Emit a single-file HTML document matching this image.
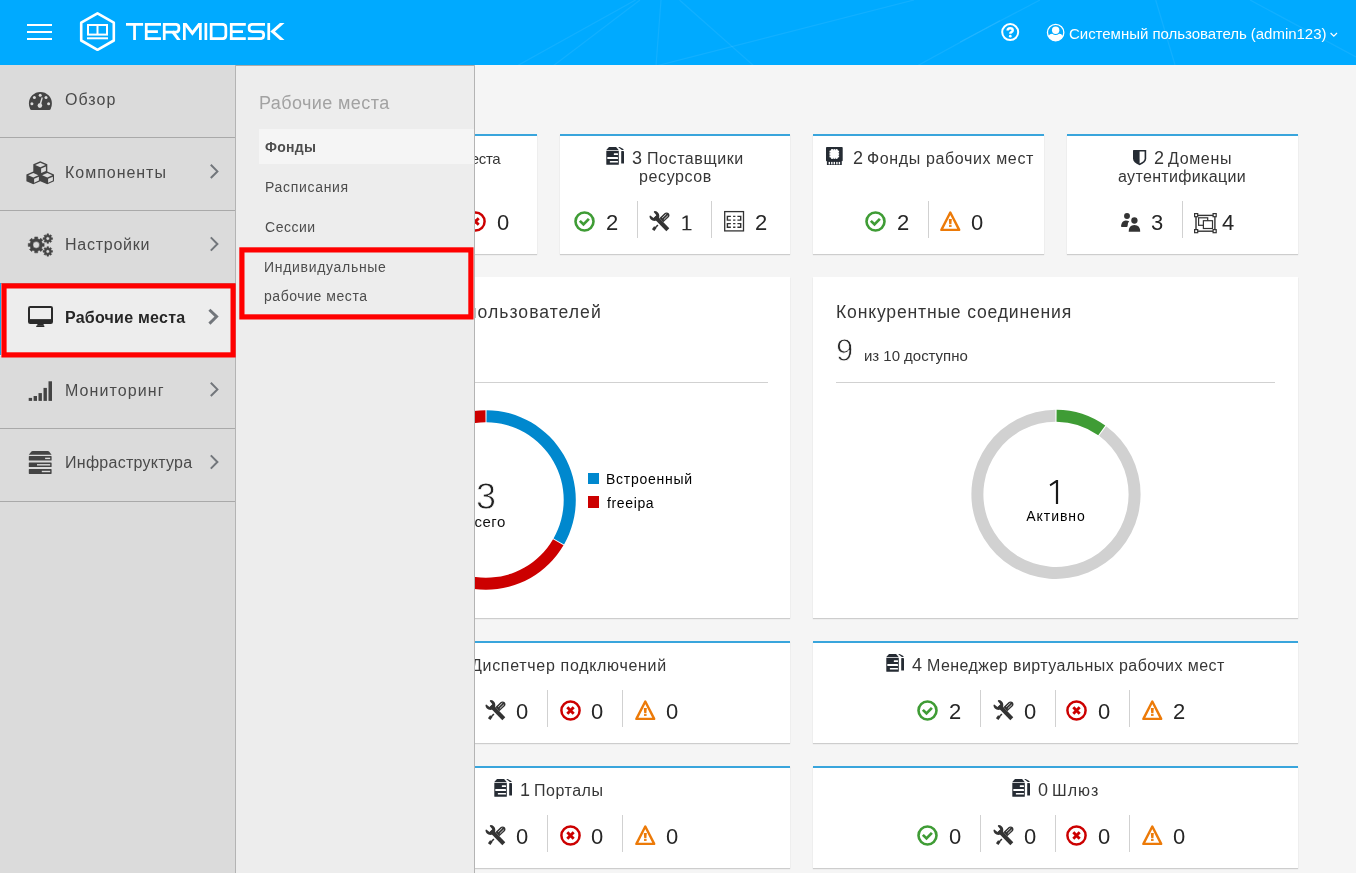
<!DOCTYPE html>
<html lang="ru">
<head>
<meta charset="utf-8">
<title>Termidesk</title>
<style>
*{box-sizing:border-box;margin:0;padding:0}
html,body{width:1356px;height:873px;overflow:hidden}
body{font-family:"Liberation Sans",sans-serif;background:#f5f5f5;color:#363636;position:relative}
.abs{position:absolute}
.t{position:absolute;white-space:nowrap;line-height:1;will-change:transform}
#hdr{position:absolute;left:0;top:0;width:1356px;height:65px;background:#00aaff;overflow:hidden}
#hdr .t{color:#fff}
#side{position:absolute;left:0;top:65px;width:235px;height:808px;background:#dbdbdb}
#sideb{position:absolute;left:235px;top:65px;width:1px;height:808px;background:#b4b4b4}
.sep{position:absolute;left:0;width:235px;height:1px;background:#a9a9a9}
#side .t{font-size:16px;color:#4a4a4a;left:66px}
#sub{position:absolute;left:236px;top:65px;width:238px;height:808px;background:#ededed}
#subb{position:absolute;left:474px;top:65px;width:1px;height:808px;background:#b4b4b4}
#sub .t{font-size:14px;color:#4d4d4d;left:29px}
.card{position:absolute;background:#fff;box-shadow:0 1px 1px rgba(3,3,3,.16)}
.card.acc{border-top:2px solid #39a5dc}
.card .t{color:#363636}
.ttl{font-size:16px}
.num{font-size:22px}
.vl{position:absolute;width:1px;background:#d1d1d1}
.hl{position:absolute;height:1px;background:#d1d1d1}
svg{position:absolute;overflow:visible}
</style>
</head>
<body>
<svg width="0" height="0" style="left:0;top:0">
<defs>
<!-- ok: 21x21, center 10.5,10.5 -->
<symbol id="i-ok" viewBox="0 0 21 21" overflow="visible">
<circle cx="10.5" cy="10.5" r="9.0" fill="none" stroke="#3f9c35" stroke-width="2.6"/>
<path d="M4.9 10.7 L6.8 8.9 L9.5 11.4 L13.9 6.9 L15.9 8.7 L9.5 15.2 Z" fill="#3f9c35"/>
</symbol>
<!-- err -->
<symbol id="i-err" viewBox="0 0 21 21" overflow="visible">
<circle cx="10.5" cy="10.5" r="9.1" fill="none" stroke="#cc0000" stroke-width="2.5"/>
<path d="M7.3 7.3 L13.7 13.7 M13.7 7.3 L7.3 13.7" fill="none" stroke="#cc0000" stroke-width="2.9"/>
</symbol>
<!-- warn: 20.6 x 20.3 -->
<symbol id="i-warn" viewBox="0 0 21 21" overflow="visible">
<path d="M10.3 1.5 L19.2 18.9 H1.4 Z" fill="none" stroke="#ec7a08" stroke-width="2.4" stroke-linejoin="round"/>
<path d="M8.8 8 H11.8 L11.4 13.2 H9.2 Z" fill="#ec7a08"/>
<rect x="9" y="14.1" width="2.6" height="1.8" fill="#ec7a08"/>
</symbol>
<!-- tools: wrench + screwdriver, 21x20.5 -->
<symbol id="i-tools" viewBox="0 0 21 21" overflow="visible">
<g fill="none" stroke="#333">
<path d="M6.2 5.7 L18.8 18.7" stroke-width="4.1"/>
<path d="M12.4 9.1 L17.2 4.6" stroke-width="5.6"/>
<path d="M8.9 14 L5.6 17.5" stroke-width="1.5"/>
<path d="M6.3 16.2 L4.2 19.2" stroke-width="3"/>
</g>
<circle cx="17.6" cy="4.2" r="2.8" fill="#333"/>
<path d="M5.4 0 A4.95 4.95 0 1 1 0.45 4.95 L1.3 4.4 L4.5 7 L7.4 4.2 L4.7 0.9 Z" fill="#333" transform="rotate(0 5.4 4.95)"/>
<g stroke="#fff" stroke-width=".8" fill="none">
<path d="M13.2 6.9 L17.3 3.0"/><path d="M14.8 8.6 L18.9 4.7"/>
</g>
</symbol>
<!-- table -->
<symbol id="i-table" viewBox="0 0 21 21" overflow="visible">
<rect x="0.7" y="0.6" width="18.8" height="19.3" fill="none" stroke="#333" stroke-width="1.3"/>
<g fill="none" stroke="#333" stroke-width="1.4">
<path d="M6.9 5.4 H3.4 V9.1 H6.9 M9.1 5.4 H11.4 M9.1 9.1 H11.4 M13.4 5.4 H16.7 V9.1 H13.4"/>
<path d="M6.9 12.6 H3.4 V16.3 H6.9 M9.1 12.6 H11.4 M9.1 16.3 H11.4 M13.4 12.6 H16.7 V16.3 H13.4"/>
</g>
</symbol>
<!-- users: 19.2 x 18.7 -->
<symbol id="i-users" viewBox="0 0 20 19" overflow="visible">
<g fill="#333">
<circle cx="6" cy="2.95" r="2.95"/>
<path d="M0 12.9 Q0.7 8 4.6 7.6 Q6.4 7.5 8.2 8.3 Q6.2 10.2 6.6 12.9 Q6.5 13.9 5.6 13.9 H0.9 Q0 13.9 0 12.9 Z"/>
<circle cx="13.4" cy="7.5" r="3.15"/>
<path d="M7.7 18.7 Q7.6 12 13.4 11.9 Q19.3 12 19.2 18.7 Z"/>
</g>
</symbol>
<!-- resize: 22.8 x 20.3 -->
<symbol id="i-resize" viewBox="0 0 23 21" overflow="visible">
<g fill="#fff" stroke="#333" stroke-width="1.2">
<rect x="2" y="2.4" width="18.9" height="15.8" fill="none" stroke-width="1.4"/>
<rect x="4.6" y="4.8" width="9.1" height="7.5"/>
<rect x="9.4" y="7.7" width="9.1" height="7.8"/>
<rect x="0.6" y="0.6" width="3.1" height="3.1"/><rect x="19.1" y="0.6" width="3.1" height="3.1"/>
<rect x="0.6" y="16.6" width="3.1" height="3.1"/><rect x="19.1" y="16.6" width="3.1" height="3.1"/>
</g>
</symbol>
<!-- title server icon: 19 x 18 -->
<symbol id="i-srv" viewBox="0 0 19 18" overflow="visible">
<g fill="#252b33">
<path d="M3.2 0 H9.9 Q10.3 0 10.6 0.4 L12.6 2.9 H0.3 L2.5 0.4 Q2.8 0 3.2 0 Z"/>
<path d="M0.3 3.8 H12.8 V17.3 Q12.8 17.8 12.3 17.8 H0.8 Q0.3 17.8 0.3 17.3 Z"/>
<rect x="15.2" y="4" width="2.8" height="12.6" rx=".4"/>
<path d="M12.1 0 H13.7 L17.7 2.3 L17.2 3 H15.8 Z"/>
</g>
<g fill="#fff">
<rect x="7.8" y="6.2" width="4.2" height="1.7" rx=".5"/>
<rect x="1.3" y="10" width="10.7" height="2" rx=".6"/>
<rect x="3.8" y="13.9" width="8.2" height="1.7" rx=".5"/>
</g>
</symbol>
<!-- memory: 16.7 x 18.1 -->
<symbol id="i-mem" viewBox="0 0 17 18" overflow="visible">
<rect x="0" y="0" width="16.7" height="14.2" rx=".8" fill="#252b33"/>
<rect x="0.9" y="14" width="14.9" height="4.1" rx=".5" fill="#252b33"/>
<rect x="4.6" y="3.2" width="7.5" height="7.6" fill="#fff"/>
<g fill="#fff">
<rect x="3.5" y="3.7" width="9.6" height="1.9"/><rect x="3.5" y="6.1" width="9.6" height="1.8"/><rect x="3.5" y="8.4" width="9.6" height="1.9"/>
<rect x="5.1" y="2.1" width="1.9" height="9.8"/><rect x="7.4" y="2.1" width="1.8" height="9.8"/><rect x="9.6" y="2.1" width="1.9" height="9.8"/>
<rect x="2.6" y="14.9" width="1.4" height="2.5"/><rect x="5.1" y="14.9" width="1.4" height="2.5"/><rect x="7.6" y="14.9" width="1.4" height="2.5"/><rect x="10.2" y="14.9" width="1.4" height="2.5"/><rect x="12.7" y="14.9" width="1.4" height="2.5"/>
</g>
</symbol>
<!-- shield: 13.2 x 15.3 -->
<symbol id="i-shield" viewBox="0 0 14 16" overflow="visible">
<path d="M0.6 0 H12.6 Q13.2 0 13.2 0.6 V8.6 Q13.2 12.6 6.6 15.3 Q0 12.6 0 8.6 V0.6 Q0 0 0.6 0 Z" fill="#252b33"/>
<path d="M6.6 1.6 H11.6 V8.6 Q11.6 11.4 6.6 13.6 Z" fill="#fff"/>
</symbol>
</defs>
</svg>
<div id="content">
<div class="card acc" style="left:307px;top:134px;width:230px;height:120px"></div>
<div class="card acc" style="left:560px;top:134px;width:230px;height:120px"></div>
<div class="card acc" style="left:813px;top:134px;width:231px;height:120px"></div>
<div class="card acc" style="left:1067px;top:134px;width:231px;height:120px"></div>
<div class="t" id="c1" style="top:151px;font-size:15px;right:855.80px;letter-spacing:-.4px;">Рабочие места</div>
<svg width="21" height="21" style="left:464.80px;top:210.70px"><use href="#i-err"/></svg>
<div class="t" id="c2" style="top:212px;font-size:22px;left:502.70px;transform:translateX(-50%);color:#262626;">0</div>
<svg width="19" height="18" style="left:606.20px;top:147.10px"><use href="#i-srv"/></svg>
<div class="t" id="c3" style="top:149px;font-size:18px;left:632.20px;">3</div>
<div class="t" id="c4" style="top:151px;font-size:16px;left:647.20px;letter-spacing:0.58px;">Поставщики</div>
<div class="t" id="c5" style="top:169px;font-size:16px;left:639.20px;letter-spacing:0.61px;">ресурсов</div>
<svg width="21" height="21" style="left:574.00px;top:210.70px"><use href="#i-ok"/></svg>
<div class="t" id="c6" style="top:212px;font-size:22px;left:611.60px;transform:translateX(-50%);color:#262626;">2</div>
<div class="vl" style="left:637px;top:201.0px;height:37.0px"></div>
<svg width="21" height="21" style="left:649.00px;top:211.00px"><use href="#i-tools"/></svg>
<svg width="11" height="16" style="left:682.10px;top:214.60px" viewBox="0 0 11 16"><path d="M0.3 2.7 L3.9 0.6 H5.7 V13.9 H9.5 V15.2 H0.5 V13.9 H3.8 V2.4 L0.7 4.1 Z" fill="#2b2b2b"/></svg>
<div class="vl" style="left:711px;top:201.0px;height:37.0px"></div>
<svg width="21" height="21" style="left:723.90px;top:210.60px"><use href="#i-table"/></svg>
<div class="t" id="c7" style="top:212px;font-size:22px;left:761.00px;transform:translateX(-50%);color:#262626;">2</div>
<svg width="17" height="18" style="left:826.20px;top:147.00px"><use href="#i-mem"/></svg>
<div class="t" id="c8" style="top:149px;font-size:18px;left:852.90px;">2</div>
<div class="t" id="c9" style="top:151px;font-size:16px;left:867.20px;letter-spacing:0.63px;">Фонды рабочих мест</div>
<svg width="21" height="21" style="left:865.00px;top:210.70px"><use href="#i-ok"/></svg>
<div class="t" id="c10" style="top:212px;font-size:22px;left:902.60px;transform:translateX(-50%);color:#262626;">2</div>
<div class="vl" style="left:928px;top:201.0px;height:37.0px"></div>
<svg width="21" height="21" style="left:939.90px;top:210.60px"><use href="#i-warn"/></svg>
<div class="t" id="c11" style="top:212px;font-size:22px;left:977.30px;transform:translateX(-50%);color:#262626;">0</div>
<svg width="14" height="16" style="left:1132.80px;top:150.00px"><use href="#i-shield"/></svg>
<div class="t" id="c12" style="top:149px;font-size:18px;left:1153.90px;">2</div>
<div class="t" id="c13" style="top:151px;font-size:16px;left:1167.60px;letter-spacing:0.65px;">Домены</div>
<div class="t" id="c14" style="top:169px;font-size:16px;left:1118.20px;letter-spacing:0.35px;">аутентификации</div>
<svg width="20" height="19" style="left:1121.10px;top:212.60px"><use href="#i-users"/></svg>
<div class="t" id="c15" style="top:212px;font-size:22px;left:1156.70px;transform:translateX(-50%);color:#262626;">3</div>
<div class="vl" style="left:1182px;top:201.0px;height:37.0px"></div>
<svg width="23" height="21" style="left:1194.20px;top:212.60px"><use href="#i-resize"/></svg>
<div class="t" id="c16" style="top:212px;font-size:22px;left:1228.30px;transform:translateX(-50%);color:#262626;">4</div>
<!--ROW2-->
<div class="card" style="left:307px;top:277px;width:483px;height:341px"></div>
<div class="card" style="left:813px;top:277px;width:485px;height:341px"></div>
<div class="t" id="c17" style="top:304px;font-size:17.6px;right:754.60px;letter-spacing:1.02px;">пользователей</div>
<div class="hl" style="left:330px;top:382px;width:438px"></div>
<svg width="1356" height="873" style="left:0;top:0" viewBox="0 0 1356 873">
<path d="M486.55 410.20 A89.80 89.80 0 0 1 564.04 544.42 L553.53 538.44 A77.70 77.70 0 0 0 486.47 422.30 Z" fill="#0088ce"/>
<path d="M563.49 545.37 A89.80 89.80 0 1 1 485.45 410.20 L485.53 422.30 A77.70 77.70 0 1 0 553.05 539.26 Z" fill="#cc0000"/>
<path d="M1056.59 409.70 A84.60 84.60 0 0 1 1105.25 425.51 L1098.26 435.27 A72.60 72.60 0 0 0 1056.51 421.70 Z" fill="#3f9c35"/>
<path d="M1106.20 426.21 A84.60 84.60 0 1 1 1055.41 409.70 L1055.49 421.70 A72.60 72.60 0 1 0 1099.08 435.86 Z" fill="#d1d1d1"/>
</svg>
<div class="t" id="c18" style="top:479px;font-size:36px;left:486.00px;transform:translateX(-50%);color:#222;-webkit-text-stroke:.8px #fff;">3</div>
<div class="t" id="c19" style="top:514px;font-size:15px;left:486.00px;transform:translateX(-50%);letter-spacing:0.57px;color:#111;">всего</div>
<div class="abs" style="left:588px;top:473px;width:11px;height:11px;background:#0088ce"></div>
<div class="abs" style="left:588px;top:496px;width:11px;height:12px;background:#cc0000"></div>
<div class="t" id="c20" style="top:472px;font-size:14px;left:606.20px;letter-spacing:0.73px;color:#000;">Встроенный</div>
<div class="t" id="c21" style="top:496px;font-size:14px;left:606.60px;letter-spacing:0.63px;color:#000;">freeipa</div>
<div class="t" id="c22" style="top:304px;font-size:17.6px;left:836.40px;letter-spacing:0.81px;">Конкурентные соединения</div>
<div class="t" id="c23" style="top:335px;font-size:31px;left:835.70px;color:#2a2a2a;-webkit-text-stroke:.8px #fff;">9</div>
<div class="t" id="c24" style="top:348px;font-size:15px;left:863.80px;letter-spacing:-0.03px;">из 10 доступно</div>
<div class="hl" style="left:836px;top:382px;width:439px"></div>
<svg width="12" height="26" style="left:1048px;top:479px" viewBox="1048 479 12 26"><path d="M1049.6 484.6 L1056.2 480 H1058.1 V504 H1055.9 V482.7 L1050.5 486.2 Z" fill="#1a1a1a"/></svg>
<div class="t" id="c25" style="top:509px;font-size:14px;left:1056.00px;transform:translateX(-50%);letter-spacing:0.98px;color:#000;">Активно</div>
<!--ROW3-->
<div class="card acc" style="left:307px;top:641px;width:483px;height:102px"></div>
<div class="card acc" style="left:813px;top:641px;width:485px;height:102px"></div>
<div class="t" id="c26" style="top:658px;font-size:16px;right:689.20px;letter-spacing:0.69px;">Диспетчер подключений</div>
<svg width="19" height="18" style="left:886.20px;top:654.00px"><use href="#i-srv"/></svg>
<div class="t" id="c27" style="top:656px;font-size:18px;left:912.40px;">4</div>
<div class="t" id="c28" style="top:658px;font-size:16px;left:927.40px;letter-spacing:0.44px;">Менеджер виртуальных рабочих мест</div>
<div class="vl" style="left:472px;top:690.2px;height:36.8px"></div>
<svg width="21" height="21" style="left:484.70px;top:699.90px"><use href="#i-tools"/></svg>
<div class="t" id="c29" style="top:701px;font-size:22px;left:522.10px;transform:translateX(-50%);color:#262626;">0</div>
<div class="vl" style="left:547px;top:690.2px;height:36.8px"></div>
<svg width="21" height="21" style="left:559.50px;top:699.60px"><use href="#i-err"/></svg>
<div class="t" id="c30" style="top:701px;font-size:22px;left:596.80px;transform:translateX(-50%);color:#262626;">0</div>
<div class="vl" style="left:622px;top:690.2px;height:36.8px"></div>
<svg width="21" height="21" style="left:634.50px;top:699.70px"><use href="#i-warn"/></svg>
<div class="t" id="c31" style="top:701px;font-size:22px;left:672.00px;transform:translateX(-50%);color:#262626;">0</div>
<svg width="21" height="21" style="left:917.00px;top:699.60px"><use href="#i-ok"/></svg>
<div class="t" id="c32" style="top:701px;font-size:22px;left:954.80px;transform:translateX(-50%);color:#262626;">2</div>
<div class="vl" style="left:980px;top:690.2px;height:36.8px"></div>
<svg width="21" height="21" style="left:992.50px;top:699.90px"><use href="#i-tools"/></svg>
<div class="t" id="c33" style="top:701px;font-size:22px;left:1029.60px;transform:translateX(-50%);color:#262626;">0</div>
<div class="vl" style="left:1054.5px;top:690.2px;height:36.8px"></div>
<svg width="21" height="21" style="left:1066.40px;top:699.60px"><use href="#i-err"/></svg>
<div class="t" id="c34" style="top:701px;font-size:22px;left:1104.40px;transform:translateX(-50%);color:#262626;">0</div>
<div class="vl" style="left:1129px;top:690.2px;height:36.8px"></div>
<svg width="21" height="21" style="left:1141.50px;top:699.70px"><use href="#i-warn"/></svg>
<div class="t" id="c35" style="top:701px;font-size:22px;left:1178.80px;transform:translateX(-50%);color:#262626;">2</div>
<div class="card acc" style="left:307px;top:766px;width:483px;height:102px"></div>
<div class="card acc" style="left:813px;top:766px;width:485px;height:102px"></div>
<svg width="19" height="18" style="left:493.70px;top:779.00px"><use href="#i-srv"/></svg>
<div class="t" id="c36" style="top:781px;font-size:18px;left:520.00px;">1</div>
<div class="t" id="c37" style="top:783px;font-size:16px;left:534.20px;letter-spacing:0.51px;">Порталы</div>
<svg width="19" height="18" style="left:1011.90px;top:779.00px"><use href="#i-srv"/></svg>
<div class="t" id="c38" style="top:781px;font-size:18px;left:1037.70px;">0</div>
<div class="t" id="c39" style="top:783px;font-size:16px;left:1052.40px;letter-spacing:0.99px;">Шлюз</div>
<div class="vl" style="left:472px;top:815.2px;height:36.8px"></div>
<svg width="21" height="21" style="left:484.70px;top:824.90px"><use href="#i-tools"/></svg>
<div class="t" id="c40" style="top:826px;font-size:22px;left:522.10px;transform:translateX(-50%);color:#262626;">0</div>
<div class="vl" style="left:547px;top:815.2px;height:36.8px"></div>
<svg width="21" height="21" style="left:559.50px;top:824.60px"><use href="#i-err"/></svg>
<div class="t" id="c41" style="top:826px;font-size:22px;left:596.80px;transform:translateX(-50%);color:#262626;">0</div>
<div class="vl" style="left:622px;top:815.2px;height:36.8px"></div>
<svg width="21" height="21" style="left:634.50px;top:824.70px"><use href="#i-warn"/></svg>
<div class="t" id="c42" style="top:826px;font-size:22px;left:672.00px;transform:translateX(-50%);color:#262626;">0</div>
<svg width="21" height="21" style="left:917.00px;top:824.60px"><use href="#i-ok"/></svg>
<div class="t" id="c43" style="top:826px;font-size:22px;left:954.80px;transform:translateX(-50%);color:#262626;">0</div>
<div class="vl" style="left:980px;top:815.2px;height:36.8px"></div>
<svg width="21" height="21" style="left:992.50px;top:824.90px"><use href="#i-tools"/></svg>
<div class="t" id="c44" style="top:826px;font-size:22px;left:1029.60px;transform:translateX(-50%);color:#262626;">0</div>
<div class="vl" style="left:1054.5px;top:815.2px;height:36.8px"></div>
<svg width="21" height="21" style="left:1066.40px;top:824.60px"><use href="#i-err"/></svg>
<div class="t" id="c45" style="top:826px;font-size:22px;left:1104.40px;transform:translateX(-50%);color:#262626;">0</div>
<div class="vl" style="left:1129px;top:815.2px;height:36.8px"></div>
<svg width="21" height="21" style="left:1141.50px;top:824.70px"><use href="#i-warn"/></svg>
<div class="t" id="c46" style="top:826px;font-size:22px;left:1178.80px;transform:translateX(-50%);color:#262626;">0</div>
</div>
<div id="hdr">
<!-- hamburger -->
<div class="abs" style="left:27px;top:24px;width:25px;height:2px;background:#fff"></div>
<div class="abs" style="left:27px;top:31px;width:25px;height:2px;background:#fff"></div>
<div class="abs" style="left:27px;top:38px;width:25px;height:2px;background:#fff"></div>
<!-- faint decorative lines -->
<svg width="1356" height="65" style="left:0;top:0" viewBox="0 0 1356 65">
<g stroke="#ffffff" stroke-opacity=".07" stroke-width="1.2" fill="none">
<path d="M1040 0 L960 42"/><path d="M1155.7 0 L1175 65"/><path d="M1250 0 L1356 57"/><path d="M635.6 0 L516.8 66"/><path d="M640 0 L553 66"/><path d="M661 0 L656 66"/><path d="M679.5 0 L754 66"/><path d="M914 0 L656 66"/><path d="M1000 20.6 L917 66"/>
</g>
</svg>
<!-- logo -->
<svg width="300" height="65" style="left:0;top:0" viewBox="0 0 300 65">
<defs><clipPath id="lc"><rect x="120" y="23" width="170" height="17"/></clipPath></defs>
<g fill="none" stroke="#fff" stroke-width="2.6" stroke-linejoin="round">
<path d="M97.5 13.4 L113.8 22.7 L113.8 40.5 L97.5 49.8 L81.2 40.5 L81.2 22.7 Z"/>
</g>
<g fill="none" stroke="#fff" stroke-width="2">
<rect x="88" y="25" width="19" height="9.6"/>
<path d="M97.5 25 V34.6"/>
<path d="M87 38.3 H108"/>
</g>
<g clip-path="url(#lc)" fill="none" stroke="#fff" stroke-width="2.75" stroke-linejoin="miter">
<!-- T -->
<path d="M126 24.35 H143.1 M134.55 23 V40"/>
<!-- E -->
<path d="M161 24.35 H146.25 V38.65 H161 M146.25 31.5 H157.9"/>
<!-- R -->
<path d="M164.25 40 V24.35 H175.8 Q178.85 24.35 178.85 27.4 V29.1 Q178.85 32.15 175.8 32.15 H164.25"/>
<path d="M172.6 31.5 L179.6 41" stroke-width="3"/>
<!-- M -->
<path d="M184.35 40 V22" /><path d="M200.35 40 V22"/>
<path d="M184.0 22.2 L192.4 33.2 L200.8 22.2" stroke-width="3"/>
<!-- I -->
<path d="M205.85 23 V40"/>
<!-- D -->
<path d="M211.15 24.35 H222.4 Q225.85 24.35 225.85 27.8 V35.2 Q225.85 38.65 222.4 38.65 H211.15 Z"/>
<!-- E -->
<path d="M245.8 24.35 H231.25 V38.65 H245.8 M231.25 31.5 H243"/>
<!-- S -->
<path d="M265 24.35 H252.2 Q249.15 24.35 249.15 27.3 V28.5 Q249.15 31.5 252.2 31.5 H260.6 Q263.65 31.5 263.65 34.5 V35.6 Q263.65 38.65 260.6 38.65 H247.8"/>
<!-- K -->
<path d="M268.75 23 V40"/>
<path d="M284.2 21.3 L272.6 31.5 L284.2 41.7" stroke-width="3"/>
</g>
</svg>
<!-- help -->
<svg width="20" height="20" style="left:1000px;top:22px" viewBox="0 0 20 20">
<circle cx="10.2" cy="10.1" r="8" fill="none" stroke="#fff" stroke-width="2"/>
<g transform="translate(10.2 10.3) scale(.88) translate(-10.2 -10.3)"><path d="M7.3 8.2 Q7.3 5.6 10.2 5.6 Q13.1 5.6 13.1 8 Q13.1 9.5 11.6 10.2 Q10.3 10.8 10.3 12" fill="none" stroke="#fff" stroke-width="2.8"/>
<circle cx="10.3" cy="14.7" r="1.55" fill="#fff"/>
</g>
</svg>
<!-- user -->
<svg width="20" height="20" style="left:1046px;top:23px" viewBox="0 0 20 20">
<defs><clipPath id="uc"><circle cx="9.65" cy="9.6" r="8.3"/></clipPath></defs>
<circle cx="9.65" cy="9.6" r="8.2" fill="none" stroke="#fff" stroke-width="1.3"/>
<circle cx="9.65" cy="7.3" r="3.7" fill="#fff"/>
<path clip-path="url(#uc)" d="M2.5 19 V14.2 Q2.5 11.2 6.2 10.8 Q9.65 13.2 13.1 10.8 Q16.8 11.2 16.8 14.2 V19 Z" fill="#fff"/>
</svg>
<div class="t" id="usr" style="left:1068.6px;top:26px;font-size:15px;letter-spacing:-.03px">Системный пользователь (admin123)</div>
<svg width="10" height="8" style="left:1329px;top:31px" viewBox="0 0 10 8">
<path d="M1.6 2 L4.8 5.2 L8 2" fill="none" stroke="#fff" stroke-width="1.2"/>
</svg>
</div>
<div id="side">
<!-- separators -->
<div class="sep" style="top:72px"></div>
<div class="sep" style="top:145px"></div>
<div class="sep" style="top:218px"></div>
<div class="sep" style="top:363px"></div>
<div class="sep" style="top:436px"></div>
<!-- active item -->
<div class="abs" style="left:0;top:219px;width:235px;height:72px;background:#ededed"></div>
<div class="abs" style="left:0;top:218px;width:1.2px;height:72px;background:#1ea7e8"></div>
<!-- labels -->
<div class="t" id="s1" style="letter-spacing:1.02px;left:65.3px;top:27px">Обзор</div>
<div class="t" id="s2" style="letter-spacing:0.97px;left:65.3px;top:100px">Компоненты</div>
<div class="t" id="s3" style="letter-spacing:0.75px;left:65.3px;top:172px">Настройки</div>
<div class="t" id="s4" style="letter-spacing:0.24px;left:65.3px;top:245px;font-weight:bold;color:#262626">Рабочие места</div>
<div class="t" id="s5" style="letter-spacing:1.09px;left:65.3px;top:318px">Мониторинг</div>
<div class="t" id="s6" style="letter-spacing:0.27px;left:65.3px;top:390px">Инфраструктура</div>
<!-- icons: coordinates are page coords, svg origin shifted by -65 -->
<svg width="235" height="808" style="left:0;top:0" viewBox="0 65 235 808">
<!-- dashboard -->
<g fill="#444">
<path d="M40.4 92 A11.5 11.5 0 0 1 51.9 103.5 Q51.9 106.6 50.6 109.2 Q50.2 110 49.3 110 H31.5 Q30.6 110 30.2 109.2 Q28.9 106.6 28.9 103.5 A11.5 11.5 0 0 1 40.4 92 Z"/>
</g>
<g fill="#dbdbdb">
<circle cx="31.9" cy="103.7" r="1.5"/><circle cx="34.4" cy="97.6" r="1.5"/><circle cx="40.2" cy="95.2" r="1.5"/><circle cx="46.0" cy="97.6" r="1.5"/><circle cx="48.6" cy="103.7" r="1.5"/>
<circle cx="39.9" cy="105.6" r="2.3"/>
<path d="M39.3 104.8 L41.6 97.3 L42.8 97.7 L40.9 105.3 Z"/>
</g>
<!-- cubes -->
<g fill="#444">
<path d="M40.3 161.2 L47.3 164.3 V171.6 L54 174.6 V181.2 L47.3 184.2 L40.3 181.3 L33.3 184.2 L26.4 181.2 V174.6 L33.3 171.6 V164.3 Z"/>
</g>
<g fill="#dbdbdb">
<path d="M40.3 162.7 L45.4 164.9 L40.3 167.2 L35.2 164.9 Z"/>
<path d="M41.1 168.5 L45.9 166.4 V170.9 L41.1 173.0 Z"/>
<path d="M33.3 173.0 L38.4 175.2 L33.3 177.5 L28.2 175.2 Z"/>
<path d="M34.1 178.8 L38.9 176.7 V180.6 L34.1 182.7 Z"/>
<path d="M47.3 173.0 L52.4 175.2 L47.3 177.5 L42.2 175.2 Z"/>
<path d="M48.1 178.8 L52.9 176.7 V180.6 L48.1 182.7 Z"/>
</g>
<!-- cogs -->
<g><path fill="#444" fill-rule="evenodd" stroke="#444" stroke-width=".5" stroke-linejoin="round" d="M34.73 238.77 L34.68 236.94 L37.72 236.94 L37.67 238.77 L39.49 239.53 L40.75 238.20 L42.90 240.35 L41.57 241.61 L42.33 243.43 L44.16 243.38 L44.16 246.42 L42.33 246.37 L41.57 248.19 L42.90 249.45 L40.75 251.60 L39.49 250.27 L37.67 251.03 L37.72 252.86 L34.68 252.86 L34.73 251.03 L32.91 250.27 L31.65 251.60 L29.50 249.45 L30.83 248.19 L30.07 246.37 L28.24 246.42 L28.24 243.38 L30.07 243.43 L30.83 241.61 L29.50 240.35 L31.65 238.20 L32.91 239.53 Z M32.90 244.90 a3.30 3.30 0 1 0 6.60 0 a3.30 3.30 0 1 0 -6.60 0 Z"/><path fill="#444" fill-rule="evenodd" stroke="#444" stroke-width=".5" stroke-linejoin="round" d="M46.93 235.11 L46.97 233.87 L48.63 233.87 L48.67 235.11 L49.66 235.52 L50.56 234.67 L51.73 235.84 L50.88 236.74 L51.29 237.73 L52.53 237.77 L52.53 239.43 L51.29 239.47 L50.88 240.46 L51.73 241.36 L50.56 242.53 L49.66 241.68 L48.67 242.09 L48.63 243.33 L46.97 243.33 L46.93 242.09 L45.94 241.68 L45.04 242.53 L43.87 241.36 L44.72 240.46 L44.31 239.47 L43.07 239.43 L43.07 237.77 L44.31 237.73 L44.72 236.74 L43.87 235.84 L45.04 234.67 L45.94 235.52 Z M46.05 238.60 a1.75 1.75 0 1 0 3.50 0 a1.75 1.75 0 1 0 -3.50 0 Z"/><path fill="#444" fill-rule="evenodd" stroke="#444" stroke-width=".5" stroke-linejoin="round" d="M46.93 247.91 L46.97 246.67 L48.63 246.67 L48.67 247.91 L49.66 248.32 L50.56 247.47 L51.73 248.64 L50.88 249.54 L51.29 250.53 L52.53 250.57 L52.53 252.23 L51.29 252.27 L50.88 253.26 L51.73 254.16 L50.56 255.33 L49.66 254.48 L48.67 254.89 L48.63 256.13 L46.97 256.13 L46.93 254.89 L45.94 254.48 L45.04 255.33 L43.87 254.16 L44.72 253.26 L44.31 252.27 L43.07 252.23 L43.07 250.57 L44.31 250.53 L44.72 249.54 L43.87 248.64 L45.04 247.47 L45.94 248.32 Z M46.05 251.40 a1.75 1.75 0 1 0 3.50 0 a1.75 1.75 0 1 0 -3.50 0 Z"/></g>
<!-- monitor -->
<g>
<rect x="28" y="306" width="25" height="18" rx="2.2" fill="#2a2a2a"/>
<rect x="30" y="308" width="21" height="11.1" fill="#ededed"/>
<path d="M37.6 323.5 H43.4 L43.9 325.8 H37.1 Z" fill="#2a2a2a"/>
<rect x="36.2" y="325.5" width="8.2" height="1.6" rx=".6" fill="#2a2a2a"/>
</g>
<!-- signal -->
<g fill="#444">
<rect x="28.7" y="397.9" width="3.4" height="3"/>
<rect x="33.6" y="396" width="3.4" height="4.9"/>
<rect x="38.5" y="393.1" width="3.4" height="7.8"/>
<rect x="43.5" y="387.9" width="3.4" height="13"/>
<rect x="48.5" y="381.3" width="3.5" height="19.6"/>
</g>
<!-- server -->
<g fill="#444">
<path d="M32.6 450.9 H47.9 Q48.6 450.9 49.1 451.5 L51.6 454.7 H28.8 L31.4 451.5 Q31.9 450.9 32.6 450.9 Z"/>
<rect x="28.8" y="456.1" width="22.8" height="4.5" rx=".6"/>
<rect x="28.8" y="462.5" width="22.8" height="4.5" rx=".6"/>
<rect x="28.8" y="469.1" width="22.8" height="4.8" rx=".6"/>
</g>
<g fill="#dbdbdb">
<rect x="45.1" y="457.7" width="5.1" height="1.4"/>
<rect x="37" y="464.1" width="13.2" height="1.4"/>
<rect x="41.8" y="470.8" width="8.4" height="1.4"/>
</g>
<!-- chevrons -->
<g fill="none" stroke="#72767b" stroke-width="2">
<path d="M210.8 164.8 L217.4 171.4 L210.8 178"/>
<path d="M210.8 237.4 L217.4 244 L210.8 250.6"/>
<path d="M210.8 382.8 L217.4 389.4 L210.8 396"/>
<path d="M210.8 455.4 L217.4 462 L210.8 468.6"/>
</g>
<path d="M209.4 309.7 L216.6 316.6 L209.4 323.6" fill="none" stroke="#72767b" stroke-width="2.9"/>
</svg>
</div>
<div id="sideb"></div>
<div id="sub">
<div class="abs" id="sublt" style="left:0;top:0;width:238px;height:1px;background:#ababab"></div>
<div class="abs" style="left:23px;top:64px;width:215px;height:35px;background:#f5f5f5"></div>
<div class="t" id="m0" style="letter-spacing:0.41px;left:23.4px;top:29px;font-size:18px;color:#a2a2a2">Рабочие места</div>
<div class="t" id="m1" style="letter-spacing:0.30px;top:75px;font-weight:bold">Фонды</div>
<div class="t" id="m2" style="letter-spacing:0.69px;top:115px;left:28.5px">Расписания</div>
<div class="t" id="m3" style="letter-spacing:0.53px;top:155px">Сессии</div>
<div class="t" id="m4" style="letter-spacing:0.69px;top:195px;left:28.4px">Индивидуальные</div>
<div class="t" id="m5" style="letter-spacing:0.56px;top:224px;left:28.4px">рабочие места</div>
</div>
<div id="subb"></div>
<svg width="1356" height="873" style="left:0;top:0" viewBox="0 0 1356 873">
<g fill="none" stroke="#ff0000" stroke-width="5.2">
<rect x="4" y="285.9" width="229.1" height="69"/>
<rect x="241.9" y="249.9" width="229" height="67"/>
</g>
</svg>

</body>
</html>
